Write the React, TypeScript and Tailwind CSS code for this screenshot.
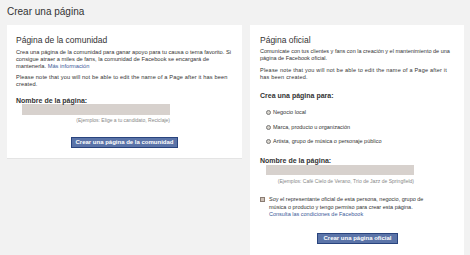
import React from "react";

const Radio: React.FC<{ label: string }> = ({ label }) => (
  <label className="flex items-center gap-[2px]">
    <span className="w-[5px] h-[5px] rounded-full border border-[#7a7a7a] bg-[#d8d4cc]" />
    <span>{label}</span>
  </label>
);

export default function App() {
  return (
    <div
      className="w-[470px] h-[255px] bg-[#f2f2f2] text-[#333] overflow-hidden"
      style={{ fontFamily: '"Liberation Sans", Arial, sans-serif' }}
    >
      <h1 className="pl-[7px] pt-[6px] text-[10px] leading-[12px] text-[#333]">
        Crear una página
      </h1>

      <div className="flex items-start gap-[8px] pl-[7px] pt-[7px]">
        {/* Página de la comunidad */}
        <div className="w-[235px] bg-white border-b border-[#e4e4e4] px-[9px] pt-[10px] pb-[10px]">
          <h2 className="text-[8.5px] leading-[10px] mb-[4px]">
            Página de la comunidad
          </h2>
          <p className="text-[5.7px] leading-[7px]">
            Crea una página de la comunidad para ganar apoyo para tu causa o
            tema favorito. Si consigue atraer a miles de fans, la comunidad de
            Facebook se encargará de mantenerla.{" "}
            <a className="text-[#3b5998]">Más información</a>
          </p>
          <p className="text-[5.7px] leading-[7px] tracking-[0.12px] mt-[4px]">
            Please note that you will not be able to edit the name of a Page
            after it has been created.
          </p>

          <div className="mt-[9px] text-[7px] leading-[8px] font-bold">
            Nombre de la página:
          </div>
          <div className="ml-[6px] mt-[-1px] w-[148px]">
            <div className="h-[11px] bg-[#d7d1cd]" />
            <div className="text-right text-[5px] leading-[7px] text-[#888] mt-[2px]">
              (Ejemplos: Elige a tu candidato, Reciclaje)
            </div>
          </div>

          <div className="flex justify-center mt-[13px]">
            <button className="h-[11px] px-[3px] bg-[#5b74a8] border border-[#29447e] text-white text-[6px] font-bold leading-[9px]">
              Crear una página de la comunidad
            </button>
          </div>
        </div>

        {/* Página oficial */}
        <div className="w-[214px] bg-white border-b border-[#e4e4e4] pl-[10px] pr-[9px] pt-[10px] pb-[12px]">
          <h2 className="text-[8.5px] leading-[10px] mb-[3px]">
            Página oficial
          </h2>
          <p className="text-[5.5px] leading-[7px]">
            Comunícate con tus clientes y fans con la creación y el
            mantenimiento de una página de Facebook oficial.
          </p>
          <p className="text-[5.5px] leading-[7px] tracking-[0.22px] mt-[5px]">
            Please note that you will not be able to edit the name of a Page
            after it has been created.
          </p>

          <div className="mt-[11px] text-[7px] leading-[8px] font-bold">
            Crea una página para:
          </div>
          <div className="mt-[9px] ml-[6px] flex flex-col gap-[7.5px] text-[5.5px] leading-[7px]">
            <Radio label="Negocio local" />
            <Radio label="Marca, producto u organización" />
            <Radio label="Artista, grupo de música o personaje público" />
          </div>

          <div className="mt-[12px] text-[7px] leading-[8px] font-bold">
            Nombre de la página:
          </div>
          <div className="ml-[6px] w-[148px]">
            <div className="h-[10px] bg-[#d7d1cd]" />
            <div className="text-right text-[5px] leading-[7px] text-[#888] mt-[3px]">
              (Ejemplos: Café Cielo de Verano, Trío de Jazz de Springfield)
            </div>
          </div>

          <div className="flex gap-[4px] mt-[11px] text-[5.5px] leading-[7.5px]">
            <span className="mt-[1px] w-[5px] h-[5px] shrink-0 border border-[#8a7c72] bg-[#cfc2b8]" />
            <div className="w-[160px]">
              <p>
                Soy el representante oficial de esta persona, negocio, grupo de
                música o producto y tengo permiso para crear esta página.
              </p>
              <p className="text-[#3b5998]">
                Consulta las condiciones de Facebook
              </p>
            </div>
          </div>

          <div className="flex justify-center mt-[14px]">
            <button className="h-[11px] px-[5px] bg-[#5b74a8] border border-[#29447e] text-white text-[6px] font-bold leading-[9px]">
              Crear una página oficial
            </button>
          </div>
        </div>
      </div>
    </div>
  );
}
